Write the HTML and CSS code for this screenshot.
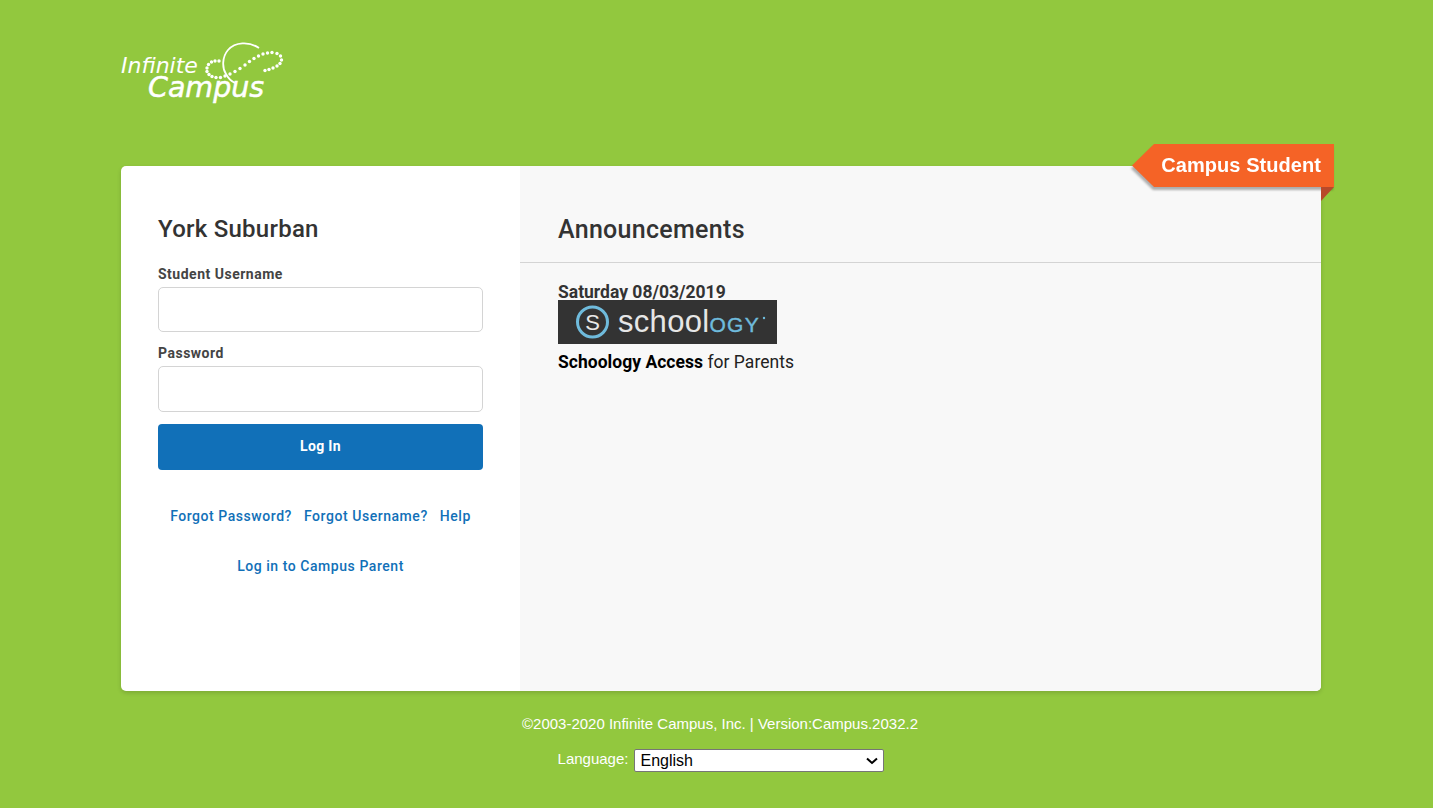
FILE: index.html
```html
<!DOCTYPE html>
<html lang="en">
<head>
<meta charset="utf-8">
<title>Infinite Campus</title>
<link rel="stylesheet" href="styles.css">
</head>
<body>
<div class="page">
  <header class="brand">
    <svg class="logo" width="164" height="68" viewBox="0 0 164 68" aria-label="Infinite Campus">
      <path class="logo-arc" d="M138 8C128 1 114 2 107 10C101 17 101 28 105 34C107 38 110 41 114 43"/>
      <g class="logo-dots">
        <circle cx="98" cy="21" r="1.700"/><circle cx="94" cy="21" r="1.700"/><circle cx="90.500" cy="22" r="1.700"/><circle cx="87.500" cy="24.500" r="1.700"/><circle cx="86" cy="28" r="1.700"/>
        <circle cx="86" cy="31.500" r="1.700"/><circle cx="88" cy="34.500" r="1.700"/><circle cx="91" cy="36.500" r="1.700"/><circle cx="95" cy="37.500" r="1.700"/><circle cx="99.500" cy="37.500" r="1.700"/>
        <circle cx="104" cy="36" r="1.700"/><circle cx="109" cy="34" r="1.700"/><circle cx="114" cy="31.500" r="1.700"/><circle cx="119" cy="28.500" r="1.700"/><circle cx="124" cy="25" r="1.700"/>
        <circle cx="128.500" cy="21.500" r="1.700"/><circle cx="133" cy="18.500" r="1.700"/><circle cx="137.500" cy="16" r="1.700"/><circle cx="142" cy="14" r="1.700"/><circle cx="146.500" cy="13" r="1.700"/>
        <circle cx="151" cy="12.500" r="1.700"/><circle cx="156" cy="13.500" r="1.700"/><circle cx="159.500" cy="16" r="1.700"/><circle cx="160.500" cy="20" r="1.700"/><circle cx="159" cy="23.500" r="1.700"/>
        <circle cx="156" cy="26" r="1.700"/><circle cx="152" cy="28" r="1.700"/><circle cx="148" cy="29.500" r="1.700"/><circle cx="144" cy="30.500" r="1.700"/>
      </g>
      <text class="logo-small" x="0" y="33">Infinite</text>
      <text class="logo-big" x="27" y="57">Campus</text>
    </svg>
  </header>

  <main class="card">
    <div class="ribbon-wrap"><div class="ribbon">Campus Student</div></div>
    <section class="login">
      <h1 class="district">York Suburban</h1>
      <form class="form">
        <label class="label" for="u">Student Username</label>
        <input class="input input-user" id="u" type="text">
        <label class="label" for="p">Password</label>
        <input class="input input-pass" id="p" type="password">
        <button class="submit" type="button">Log In</button>
      </form>
      <nav class="links">
        <a class="link" href="#">Forgot Password?</a>
        <a class="link" href="#">Forgot Username?</a>
        <a class="link" href="#">Help</a>
      </nav>
      <div class="parent"><a class="link" href="#">Log in to Campus Parent</a></div>
    </section>
    <section class="news">
      <h2 class="news-title">Announcements</h2>
      <div class="news-body">
        <div class="news-date">Saturday 08/03/2019</div>
        <svg class="schoology" width="219" height="44" viewBox="0 0 219 44" aria-label="Schoology">
          <rect class="sg-bg" width="219" height="44"/>
          <circle class="sg-ring" cx="34.500" cy="22" r="15"/>
          <text class="sg-s" x="34.500" y="29.500">S</text>
          <text class="sg-word" x="60" y="32">school<tspan class="sg-blue">OGY</tspan></text>
          <circle class="sg-tm" cx="206" cy="18" r="1.200"/>
        </svg>
        <p class="news-text"><strong>Schoology Access</strong> for Parents</p>
      </div>
    </section>
  </main>

  <footer class="footer">
    <div class="copy">©2003-2020 Infinite Campus, Inc. | Version:Campus.2032.2</div>
    <div class="lang">
      <label class="lang-label" for="l">Language:</label>
      <select class="lang-select" id="l"><option>English</option></select>
    </div>
  </footer>
</div>
</body>
</html>
```
FILE: styles.css
```css
* { box-sizing: border-box; }
html, body { margin: 0; height: 100%; }
body { background: #92c83e; font-family: Roboto, "Liberation Sans", sans-serif; color: #333; overflow: hidden; }
.page { width: 1200px; margin-left: 121px; }

.brand { height: 166px; padding-top: 40px; }
.logo { display: block; }
.logo-small { font: oblique 400 22px "DejaVu Sans", sans-serif; fill: #fff; }
.logo-big { font: oblique 400 28.500px "DejaVu Sans", sans-serif; fill: #fff; stroke: #fff; stroke-width: .5px; }
.logo-arc { fill: none; stroke: #fff; stroke-width: 1.800; }
.logo-dots { fill: #fff; }

.card { position: relative; display: flex; height: 525px; background: #fff; border-radius: 5px; box-shadow: 0 2px 4px rgba(0,0,0,.15); }

.ribbon-wrap { position: absolute; top: -22px; right: -13px; filter: drop-shadow(-1px 3px 1px rgba(0,0,0,.3)); z-index: 1; }
.ribbon { width: 202px; height: 43px; padding-right: 13px; display: flex; align-items: center; justify-content: flex-end; background: #f56326; color: #fff; font: 700 20px "Liberation Sans", Arial, sans-serif; letter-spacing: .06px; clip-path: polygon(22px 0, 100% 0, 100% 100%, 22px 100%, 0 50%); }
.card::after { content: ""; position: absolute; z-index: 2; top: 21px; right: -13px; border-style: solid; border-width: 14px 13px 0 0; border-color: #b8492a transparent transparent transparent; }

.login { width: 399px; flex: none; padding: 47px 37px 0; }
.district { margin: 0; font-size: 24px; font-weight: 500; line-height: 32px; letter-spacing: .25px; color: #333; }
.form { display: flex; flex-direction: column; margin-top: 21px; }
.label { font-size: 14px; font-weight: 700; line-height: 16px; letter-spacing: .5px; color: #444; margin-bottom: 5px; }
.input { width: 325px; border: 1px solid #d4d4d4; border-radius: 5px; background: #fff; }
.input-user { height: 45px; margin-bottom: 13px; }
.input-pass { height: 46px; margin-bottom: 12px; }
.submit { width: 325px; height: 46px; padding: 0 0 2px; border: 0; border-radius: 4px; background: #1170b8; color: #fff; font: 700 14px Roboto, sans-serif; letter-spacing: .35px; }
.links { display: flex; justify-content: center; gap: 12px; margin-top: 37px; line-height: 18px; }
.link { color: #1170b8; font-size: 14px; font-weight: 500; letter-spacing: .55px; text-decoration: none; }
.parent { margin-top: 32px; text-align: center; line-height: 18px; }

.news { flex: 1; background: #f8f8f8; border-radius: 0 5px 5px 0; }
.news-title { margin: 0; padding: 48px 38px 16px; font-size: 25px; font-weight: 500; line-height: 32px; letter-spacing: .3px; color: #333; border-bottom: 1px solid #d4d4d4; }
.news-body { padding: 22px 38px 0; }
.news-date { font-size: 17.500px; font-weight: 700; line-height: 15px; color: #333; }
.schoology { display: block; }
.sg-bg { fill: #333; }
.sg-ring { fill: none; stroke: #6fbbdc; stroke-width: 3; }
.sg-s { font: 400 22px "Liberation Sans", sans-serif; fill: #e8e8e8; text-anchor: middle; }
.sg-word { font: 400 31px "Liberation Sans", sans-serif; letter-spacing: .3px; fill: #e6e6e6; }
.sg-blue { font-size: 21px; fill: #6fbbdc; stroke: #6fbbdc; stroke-width: .4px; letter-spacing: 1.300px; }
.sg-tm { fill: #6fbbdc; }
.news-text { margin: 8px 0 0; font-size: 17.500px; line-height: 20px; letter-spacing: .03px; color: #222; }
.news-text strong { color: #000; font-weight: 700; }

.footer { font-family: "Liberation Sans", Arial, sans-serif; color: #fff; text-align: center; font-size: 15px; }
.copy { margin-top: 24px; padding-right: 2px; line-height: 18px; }
.lang { display: flex; justify-content: center; align-items: center; gap: 6px; margin-top: 16px; }
.lang-label { position: relative; top: -2px; }
.lang-select { width: 250px; height: 23px; font: 16px "Liberation Sans", Arial, sans-serif; color: #000; padding: 0 0 0 5px; border: 1px solid #767676; border-radius: 2px; appearance: none; background: #fff url("data:image/svg+xml,%3Csvg xmlns='http://www.w3.org/2000/svg' width='12' height='8' viewBox='0 0 12 8'%3E%3Cpath d='M1 1.500l5 4.500 5-4.500' fill='none' stroke='%23000' stroke-width='2'/%3E%3C/svg%3E") no-repeat right 5px center; }
```
